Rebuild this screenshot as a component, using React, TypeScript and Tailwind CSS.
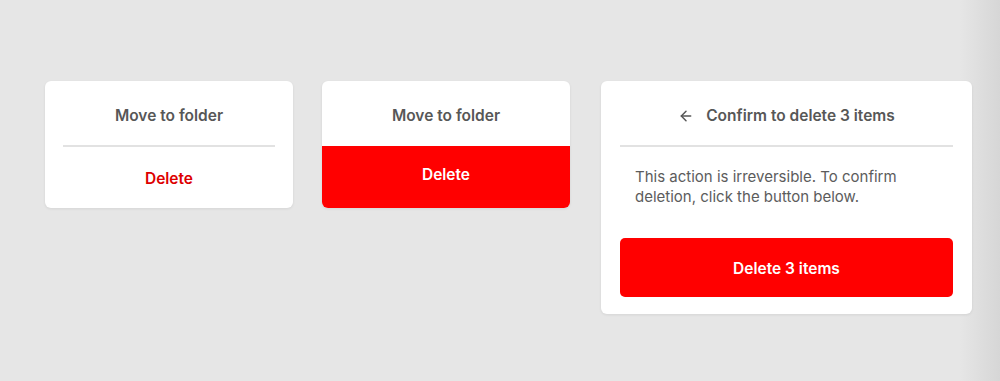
import { ArrowLeft } from "lucide-react";

const font = { fontFamily: "Inter, 'Noto Sans', sans-serif" };

const MenuCard = ({ active }: { active?: boolean }) => {
    return (
        <div className="w-[248px] bg-white rounded-[6px] shadow-[0_1px_3px_rgba(0,0,0,0.08)] overflow-hidden">
            <div className="px-[18px]">
                <div
                    className={`${active ? "h-[65px]" : "h-[64px]"} pt-[24px] text-center text-[15.5px] leading-[22px] font-semibold text-[#575757]`}
                >
                    Move to folder
                </div>
                {!active && <div className="h-[2px] bg-[#e2e2e2]"></div>}
            </div>
            {active ? (
                <div className="h-[62px] bg-[#ff0000] flex items-center justify-center pb-[5px] text-[15.5px] font-semibold text-white">
                    Delete
                </div>
            ) : (
                <div className="h-[61px] flex items-center justify-center pt-[2px] text-[15.5px] font-semibold text-[#dd0000]">
                    Delete
                </div>
            )}
        </div>
    );
};

const App = () => {
    return (
        <div
            className="w-[1000px] h-[381px] bg-[linear-gradient(to_right,#e6e6e6_0%,#e6e6e6_96%,#d6d6d6_100%)]"
            style={font}
        >
            <div className="flex items-start pt-[81px] pl-[45px]">
                <MenuCard />
                <div className="ml-[29px]">
                    <MenuCard active />
                </div>
                <div className="ml-[31px] w-[371px] bg-white rounded-[6px] shadow-[0_1px_3px_rgba(0,0,0,0.08)] px-[19px] pb-[17px]">
                    <div className="h-[64px] pt-[24px] flex items-start justify-center gap-[12px] text-[15.5px] leading-[22px] font-semibold text-[#575757]">
                        <ArrowLeft className="w-[16px] h-[16px] mt-[3px]" strokeWidth={2.25} />
                        <span>Confirm to delete 3 items</span>
                    </div>
                    <div className="h-[2px] bg-[#e2e2e2]"></div>
                    <p className="pt-[20px] px-[15px] text-[15px] leading-[20px] text-[#5c5c5c]">
                        This action is irreversible. To confirm deletion, click the button below.
                    </p>
                    <button className="mt-[31px] w-full h-[59px] pt-[3px] rounded-[5px] bg-[#ff0000] text-white text-[15.5px] font-semibold">
                        Delete 3 items
                    </button>
                </div>
            </div>
        </div>
    );
};

export default App;
